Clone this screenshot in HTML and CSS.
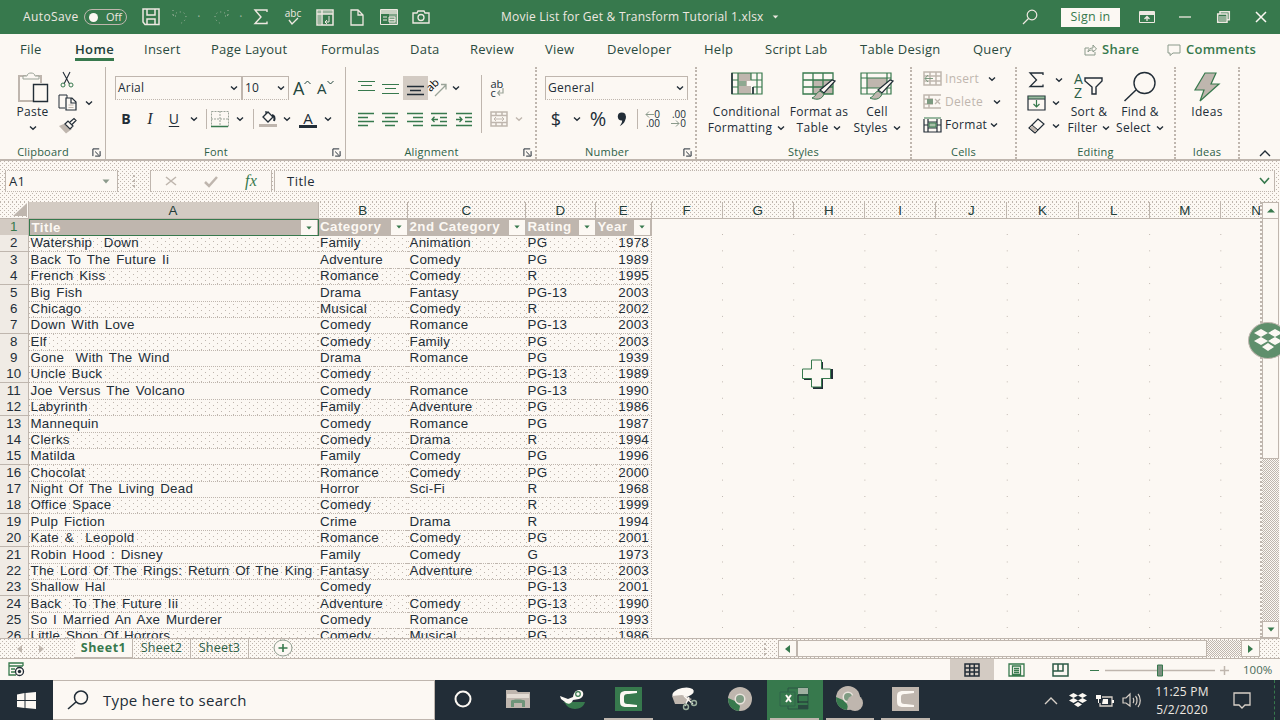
FILE: index.html
```html
<!DOCTYPE html>
<html lang="en">
<head>
<meta charset="utf-8">
<title>Movie List for Get &amp; Transform Tutorial 1.xlsx</title>
<link rel="stylesheet" href="styles.css">
</head>
<body>
<svg class="defs" width="0" height="0">
  <symbol id="chev" viewBox="0 0 8 6"><path d="M1 1.5l3 2.7 3-2.7" fill="none" stroke="currentColor" stroke-width="1.4"/></symbol>
  <symbol id="tri" viewBox="0 0 8 5"><path d="M0.5 0.5h7L4 4.5z" fill="currentColor"/></symbol>
  <symbol id="launch" viewBox="0 0 10 10"><path d="M1 9V1h7M3.5 4l4 4M9 3.5V9H3.5" fill="none" stroke="currentColor" stroke-width="1.1"/></symbol>
</svg>

<div class="app">
<header class="titlebar">
  <span class="autosave">AutoSave</span>
  <span class="toggle"><i></i><b>Off</b></span>
  <span class="tb save"><svg width="18" height="18"><path d="M1 1h16v15.500H3L1 14zM5 1v6h8V1M5 16v-5h8v5" fill="none" stroke="currentColor" stroke-width="1.500"/></svg></span>
  <span class="tb undo dim"><svg width="16" height="16"><path d="M1 1v6h6M1 7c4-6 13-5 13 1 0 3-3 5-6 7" fill="none" stroke="currentColor" stroke-dasharray="1 3"/></svg></span>
  <span class="tb dot dim">·</span>
  <span class="tb redo dim"><svg width="16" height="16"><path d="M15 1v6H9M15 7C11 1 2 2 2 8c0 3 3 5 6 7" fill="none" stroke="currentColor" stroke-dasharray="1 3"/></svg></span>
  <span class="tb dot2 dim">·</span>
  <span class="tb"><svg width="14" height="16"><path d="M13 3V1H1l6 7-6 6.500h12v-2" fill="none" stroke="currentColor" stroke-width="1.400"/></svg></span>
  <span class="tb abc"><span>abc</span><svg width="12" height="8"><path d="M2 3l3 4 6-6" fill="none" stroke="currentColor" stroke-width="1.400"/></svg></span>
  <span class="tb"><svg width="18" height="17"><path d="M1 1h16v15H1zM1 5h16M6 1v15" fill="none" stroke="currentColor" stroke-width="1.500"/><path d="M2 2h14v3H2zM2 5h3v10H2z" fill="currentColor" opacity=".55"/><path d="M13 7v6H9m2-2-2 2 2 2" fill="none" stroke="currentColor"/></svg></span>
  <span class="tb"><svg width="14" height="17"><path d="M1 1h7l5 5v10H1zM8 1v5h5" fill="none" stroke="currentColor" stroke-width="1.300"/></svg></span>
  <span class="tb"><svg width="18" height="16"><path d="M.5.5h17v15H.5z" fill="none" stroke="currentColor"/><path d="M1 1h16v4H1z" fill="currentColor" opacity=".8"/><path d="M9 5h8v10H9z" fill="currentColor" opacity=".4"/><path d="M3 8h4M3 11h4M9 8h6v5H9zM9 10.500h6" fill="none" stroke="currentColor"/></svg></span>
  <span class="tb"><svg width="18" height="14"><path d="M1 3h4l1-2h6l1 2h4v10H1z" fill="none" stroke="currentColor" stroke-width="1.400"/><circle cx="9" cy="7.500" r="3" fill="none" stroke="currentColor" stroke-width="1.300"/></svg></span>
  <span class="doc">Movie List for Get &amp; Transform Tutorial 1.xlsx</span>
  <span class="tb arrow"><svg width="7" height="4"><use href="#tri"/></svg></span>
  <span class="tb find"><svg width="16" height="16"><circle cx="10" cy="6" r="4.800" fill="none" stroke="currentColor" stroke-width="1.200"/><path d="M6.500 9.500L1 15" stroke="currentColor" stroke-width="1.300"/></svg></span>
  <span class="signin">Sign in</span>
  <span class="tb win opts"><svg width="16" height="12"><path d="M.5.5h15v11H.5z" fill="none" stroke="currentColor"/><path d="M1 1h14v3H1z" fill="currentColor"/><path d="M8 10V5.500M5.500 8L8 5.500 10.500 8" fill="none" stroke="currentColor" stroke-width="1.300"/></svg></span>
  <span class="tb win"><svg width="12" height="2"><path d="M0 1h12" stroke="currentColor" stroke-width="1.300"/></svg></span>
  <span class="tb win"><svg width="13" height="12"><path d="M3 3V.7h9.300v8H10M.7 3H10v8.300H.7z" fill="none" stroke="currentColor" stroke-width="1.500"/><path d="M2 5h7v5H2z" fill="currentColor" opacity=".5"/></svg></span>
  <span class="tb win close"><svg width="12" height="12"><path d="M1 1l10 10M11 1L1 11" stroke="currentColor" stroke-width="1.500"/></svg></span>
</header>

<nav class="tabs">
  <a>File</a><a class="on">Home</a><a>Insert</a><a>Page Layout</a><a>Formulas</a><a>Data</a><a>Review</a><a>View</a><a>Developer</a><a>Help</a><a>Script Lab</a><a>Table Design</a><a>Query</a>
  <a class="share"><svg width="13" height="12"><path d="M5 4H1v7h10V8M4 8c0-3 2-4 5-4V1l3.500 4L9 8V6C7 6 5 6 4 8z" fill="none" stroke="currentColor"/></svg>Share</a>
  <a class="comments"><svg width="14" height="12"><path d="M1 1h12v8H6l-3 2.500V9H1z" fill="none" stroke="currentColor"/></svg>Comments</a>
</nav>

<section class="ribbon">
  <div class="group clip">
    <div class="body">
      <div class="big paste"><svg width="32" height="32"><path d="M9 4H2v25h14M19 4h5v7" fill="none" stroke="#bfb6ae" stroke-width="2"/><path d="M6 7V4h4c0-4 8-4 8 0h4v3z" fill="#fcf8f3" stroke="#9aa398"/><path d="M16.500 12.500h14v17h-14z" fill="#fcf8f3" stroke="#222d37" stroke-width="1.400"/></svg><span>Paste</span><svg class="cv" width="8" height="6"><use href="#chev"/></svg></div>
      <div class="stack">
        <div class="cut"><svg width="14" height="16"><path d="M3 0l6.500 12M10 0L4 12" stroke="#222d37" fill="none" stroke-width="1.100"/><circle cx="3" cy="13" r="2" fill="none" stroke="#37794d"/><circle cx="11" cy="13" r="2" fill="none" stroke="#37794d"/></svg></div>
        <div class="copy"><svg width="19" height="17"><path d="M7 14H1V1h8v3" fill="none" stroke="#222d37"/><path d="M8 4h6l4 4v8H8zM13 4v5h5" fill="none" stroke="#222d37" stroke-width="1.200"/><path d="M10.500 11h5M10.500 13.500h5" stroke="#bfb6ae"/></svg><svg width="8" height="6"><use href="#chev"/></svg></div>
        <div><svg width="19" height="16"><path d="M1 8l7-3 6 6-6 4.500z" fill="#bfb6ae"/><path d="M7 6l3-3 5 5-3 3zM12 4l4-3.500 2 2-4 4" fill="#fcf8f3" stroke="#222d37" stroke-width="1.200"/></svg></div>
      </div>
    </div>
    <div class="cap"><span>Clipboard</span><svg width="9" height="9"><use href="#launch" /></svg></div>
  </div>

  <div class="group font">
    <div class="body col">
      <div class="r1"><span class="combo fname">Arial<svg width="8" height="6"><use href="#chev"/></svg></span><span class="combo fsize">10<svg width="8" height="6"><use href="#chev"/></svg></span><span class="b24 grow">A<svg width="7" height="5"><path d="M.5 4l3-3 3 3" fill="none" stroke="currentColor"/></svg></span><span class="b24 shrink">A<svg width="7" height="5"><path d="M.5 1l3 3 3-3" fill="none" stroke="currentColor"/></svg></span></div>
      <div class="r2"><span class="b24 bold">B</span><span class="b24 ital">I</span><span class="b24 under">U</span><span class="b16"><svg width="8" height="6"><use href="#chev"/></svg></span><i class="vs"></i><span class="b20"><svg width="18" height="17"><path d="M.5.500h17v15H.5zM9 0v16M0 8h18" fill="none" stroke="#9aa398" stroke-dasharray="2 1"/><path d="M0 15.500h17" stroke="#37794d" stroke-width="1.500"/></svg></span><span class="b20"><svg width="8" height="6"><use href="#chev"/></svg></span><i class="vs nar"></i><span class="b22"><svg width="19" height="18"><path d="M5 7l5-5 5 5-5 5zM8 4V1" fill="none" stroke="#222d37" stroke-width="1.300"/><path d="M14 5c3 1 3 3 2 6" fill="none" stroke="#222d37" stroke-width="2"/><path d="M1 14h18v3H1z" fill="#bfb6ae"/></svg></span><span class="b18"><svg width="8" height="6"><use href="#chev"/></svg></span><span class="b24 fcolor">A</span><span class="b16"><svg width="8" height="6"><use href="#chev"/></svg></span></div>
    </div>
    <div class="cap"><span>Font</span><svg width="9" height="9"><use href="#launch"/></svg></div>
  </div>

  <div class="group align">
    <div class="body">
      <div class="half">
        <div class="r1"><span class="b24h"><svg width="17" height="14"><path d="M0 .500h17M3 4.500h11M0 9.500h17" stroke="currentColor" stroke-width="1.200"/></svg></span><span class="b24h"><svg width="17" height="14"><path d="M0 3.500h17M3 7.500h11M0 12.500h17" stroke="currentColor" stroke-width="1.200"/></svg></span><span class="b24h sel"><svg width="17" height="14"><path d="M0 5.500h17M3 9.500h11M0 13.500h17" stroke="#222d37" stroke-width="1.300"/></svg></span><span class="b20 orient"><svg width="20" height="18"><path d="M7 17L18 6M13 5.500h5v5" fill="none" stroke="#9aa398" stroke-width="1.300"/><text x="0" y="11" transform="rotate(-45 4 9)" font-size="11">ab</text></svg></span><span class="b16"><svg width="8" height="6"><use href="#chev"/></svg></span></div>
        <div class="r2"><span class="b24h"><svg width="17" height="15"><path d="M0 1.500h16M0 5.500h10M0 9.500h16M0 13.500h10" stroke="currentColor" stroke-width="1.300"/></svg></span><span class="b24h"><svg width="17" height="15"><path d="M0 1.500h16M3 5.500h10M0 9.500h16M3 13.500h10" stroke="currentColor" stroke-width="1.300"/></svg></span><span class="b24h"><svg width="17" height="15"><path d="M0 1.500h16M6 5.500h10M0 9.500h16M6 13.500h10" stroke="currentColor" stroke-width="1.300"/></svg></span><span class="b24h"><svg width="17" height="15"><path d="M0 1.500h16M9 5.500h7M9 9.500h7M0 13.500h16M7 7.500H1M3.500 4.700L1 7.500 3.500 10" fill="none" stroke="currentColor" stroke-width="1.300"/></svg></span><span class="b24h"><svg width="17" height="15"><path d="M0 1.500h16M9 5.500h7M9 9.500h7M0 13.500h16M0 7.500h6M3.500 4.700L6 7.500 3.500 10" fill="none" stroke="currentColor" stroke-width="1.300"/></svg></span></div>
      </div>
      <i class="vs tall"></i>
      <div class="half">
        <div class="r1"><span class="b24 wrap"><span>ab</span><span class="ce">c<svg width="8" height="8"><path d="M6 0v5H1M3 2.500L.7 5 3 7.500" fill="none" stroke="#9aa398" stroke-width="1.200"/></svg></span></span></div>
        <div class="r2"><span class="b24"><svg width="18" height="16"><path d="M1 1h16v14H1zM1 4.500h16M1 11.500h16M6 1v3M12 1v3M6 12v3M12 12v3" fill="none" stroke="#bfb6ae" stroke-width="1.500"/><path d="M4 8h10M6 6L4 8l2 2M12 6l2 2-2 2" fill="none" stroke="#bfb6ae"/></svg></span><span class="b16 faint"><svg width="8" height="6"><use href="#chev"/></svg></span></div>
      </div>
    </div>
    <div class="cap"><span>Alignment</span><svg width="9" height="9"><use href="#launch"/></svg></div>
  </div>

  <div class="group number">
    <div class="body col">
      <div class="r1"><span class="combo fmt">General<svg width="8" height="6"><use href="#chev"/></svg></span></div>
      <div class="r2"><span class="b22 cur">$</span><span class="b20"><svg width="8" height="6"><use href="#chev"/></svg></span><span class="b22 pct">%</span><span class="b26"><svg width="10" height="15"><circle cx="4.800" cy="4.500" r="4" fill="#222d37"/><path d="M8.800 4c0 5-2 8-6 10 2-3 3-5 2-7z" fill="#222d37"/></svg></span><i class="vs four"></i><span class="b24 dec"><b><svg width="9" height="7"><path d="M9 3.500H1M4 .5L1 3.500l3 3" fill="none" stroke="#8b9a8b"/></svg>0</b><b>.00</b></span><span class="b26 dec"><b>.00</b><b><svg width="9" height="7"><path d="M0 3.500h8M5 .5l3 3-3 3" fill="none" stroke="#8b9a8b"/></svg>0</b></span></div>
    </div>
    <div class="cap"><span>Number</span><svg width="9" height="9"><use href="#launch"/></svg></div>
  </div>

  <div class="group styles">
    <div class="body">
      <div class="big w81"><svg width="32" height="28"><path d="M7 1h13v21H7z" fill="#bfb6ae"/><path d="M16 9h7v5h-7z" fill="#fcf8f3"/><path d="M1 1h30v21H1zM1 8h6M1 15h6M20 8h11M22 15h9M7 1v21M20 1v7M22 15v7M26 1v21" fill="none" stroke="#37794d" stroke-width="1.200"/><path d="M1 1v21M22 15v7" stroke="#222d37" stroke-width="1.500"/><path d="M8 9h7v5H8z" fill="#8fa991"/></svg><span>Conditional</span><span>Formatting <svg width="8" height="6"><use href="#chev"/></svg></span></div>
      <div class="big w64"><svg width="34" height="28"><path d="M11 8h20v14H11z" fill="#bfb6ae"/><path d="M1 1h30v21H1zM1 8h30M1 15h30M11 1v21M21 1v21" fill="none" stroke="#37794d" stroke-width="1.300"/><path d="M33 9L22 21l-4-3 12-10z" fill="#fcf8f3" stroke="#222d37" stroke-width="1.200"/><path d="M18 19l4 3c-2 6-8 6-12 4 4-1 4-6 8-7z" fill="#bfb6ae" stroke="#37794d"/></svg><span>Format as</span><span>Table <svg width="8" height="6"><use href="#chev"/></svg></span></div>
      <div class="big w52"><svg width="34" height="28"><path d="M7 6h20v10H7z" fill="#bfb6ae"/><path d="M1 1h30v21H1zM1 6h30M1 16h30M7 1v21M27 1v21" fill="none" stroke="#37794d" stroke-width="1.200"/><path d="M33 9L22 21l-4-3 12-10z" fill="#fcf8f3" stroke="#222d37" stroke-width="1.200"/><path d="M18 19l4 3c-2 6-8 6-12 4 4-1 4-6 8-7z" fill="#bfb6ae" stroke="#37794d"/></svg><span>Cell</span><span>Styles <svg width="8" height="6"><use href="#chev"/></svg></span></div>
    </div>
    <div class="cap"><span>Styles</span></div>
  </div>

  <div class="group cells">
    <div class="body col">
      <div class="line faint"><svg width="19" height="15"><path d="M1 1h17v13H1zM1 5h17M1 10h17M7 1v13M13 1v13" fill="none" stroke="currentColor" stroke-width="1.500"/><path d="M2 7.500h8M5 4L2 7.500 5 11" fill="none" stroke="#7c9a80"/></svg><span class="t1">Insert</span><svg class="cv" width="8" height="6"><use href="#chev"/></svg></div>
      <div class="line faint"><svg width="19" height="15"><path d="M10 1H1v13h17M1 5h9M1 10h9M6 1v13M10 1h8" fill="none" stroke="currentColor" stroke-width="1.500"/><path d="M4 5h6v5H4z" fill="#7c9a80"/><path d="M12 5l5 5M17 5l-5 5" stroke="currentColor" stroke-width="1.300"/></svg><span class="t2">Delete</span><svg class="cv" width="8" height="6"><use href="#chev"/></svg></div>
      <div class="line"><svg width="19" height="16"><path d="M1 2v13h17V2M5 5h9v6H5zM1 8h4M14 8h4M5 2v13M14 2v13" fill="none" stroke="#222d37" stroke-width="1.200"/><path d="M1 1h17M6 6h7v4H6z" stroke="#37794d" fill="#a9c0a8"/></svg><span class="t3">Format</span><svg class="cv" width="8" height="6"><use href="#chev"/></svg></div>
    </div>
    <div class="cap"><span>Cells</span></div>
  </div>

  <div class="group editing">
    <div class="body">
      <div class="stack">
        <div><svg width="20" height="16"><path d="M16 3V1H3l6.500 7L3 14.500h13v-2" fill="none" stroke="currentColor" stroke-width="1.300"/></svg><svg width="8" height="6"><use href="#chev"/></svg></div>
        <div class="pull"><svg width="20" height="16"><path d="M1 1h17v14H1zM1 4h17" fill="none" stroke="#222d37" stroke-width="1.200"/><path d="M1 1h17v3H1z" fill="#37794d" opacity=".5"/><path d="M9.500 5v7M6.500 9l3 3 3-3" fill="none" stroke="#37794d" stroke-width="1.200"/></svg><svg width="8" height="6"><use href="#chev"/></svg></div>
        <div class="pull"><svg width="20" height="16"><path d="M2 10l9-9 6 5-9 9z" fill="none" stroke="#222d37" stroke-width="1.200"/><path d="M2 10l3-3 6 5-3 3z" fill="#bfb6ae" stroke="#222d37"/></svg><svg width="8" height="6"><use href="#chev"/></svg></div>
      </div>
      <div class="big w50"><span class="sort"><span class="az"><b>A</b><b>Z</b></span><svg width="20" height="20"><path d="M1 2h17v3l-6 6v7H8v-7L1 5z" fill="none" stroke="#222d37" stroke-width="1.400"/></svg></span><span>Sort &amp;</span><span>Filter <svg width="8" height="6"><use href="#chev"/></svg></span></div>
      <div class="big w52"><svg width="34" height="30"><circle cx="21.500" cy="11" r="10.500" fill="none" stroke="#222d37" stroke-width="1.400"/><path d="M13 18L1.500 29" stroke="#222d37" stroke-width="1.500"/></svg><span>Find &amp;</span><span>Select <svg width="8" height="6"><use href="#chev"/></svg></span></div>
    </div>
    <div class="cap"><span>Editing</span></div>
  </div>

  <div class="group ideas">
    <div class="body"><div class="big w62"><svg width="26" height="30"><path d="M11 1h11l-5 11h8L6 29l4-11H1z" fill="#bfb6ae" stroke="#37794d" stroke-width="1.200"/></svg><span>Ideas</span></div></div>
    <div class="cap"><span>Ideas</span></div>
  </div>
  <div class="collapse"><svg width="12" height="8"><path d="M1 7l5-5 5 5" fill="none" stroke="#222d37" stroke-width="1.400"/></svg></div>
</section>

<section class="formula dither">
  <div class="name">A1<svg width="8" height="5"><use href="#tri"/></svg></div>
  <div class="grip"></div>
  <div class="fx"><svg width="12" height="10"><path d="M1 1l10 8M11 1L1 9" stroke="#bfb6ae" stroke-width="1.600"/></svg><svg width="14" height="11"><path d="M1 6l4 4 8-9" fill="none" stroke="#bfb6ae" stroke-width="2.500"/></svg><i>fx</i></div>
  <div class="value"><span>Title</span><svg width="11" height="8"><path d="M1 1l4.500 5L10 1" fill="none" stroke="#37794d" stroke-width="1.600"/></svg></div>
</section>

<main class="sheet">
  <div class="cellsarea">
    <div class="cols dither">
      <span class="corner"><svg width="14" height="13"><path d="M14 0v13H0z" fill="#bfb6ae"/></svg></span><span class="cur">A</span><span>B</span><span>C</span><span>D</span><span>E</span><span>F</span><span>G</span><span>H</span><span>I</span><span>J</span><span>K</span><span>L</span><span>M</span><span class="last">N</span>
    </div>
    <div class="gridwrap">
      <div class="rows">
        <div class="row head"><b>1</b><span class="selcell">Title<i><svg width="6" height="4"><use href="#tri"/></svg></i></span><span>Category<i><svg width="6" height="4"><use href="#tri"/></svg></i></span><span>2nd Category<i><svg width="6" height="4"><use href="#tri"/></svg></i></span><span>Rating<i><svg width="6" height="4"><use href="#tri"/></svg></i></span><span>Year<i><svg width="6" height="4"><use href="#tri"/></svg></i></span></div>
        <div class="row"><b>2</b><span>Watership&nbsp; Down</span><span>Family</span><span>Animation</span><span>PG</span><span>1978</span></div>
        <div class="row"><b>3</b><span>Back To The Future Ii</span><span>Adventure</span><span>Comedy</span><span>PG</span><span>1989</span></div>
        <div class="row"><b>4</b><span>French Kiss</span><span>Romance</span><span>Comedy</span><span>R</span><span>1995</span></div>
        <div class="row"><b>5</b><span>Big Fish</span><span>Drama</span><span>Fantasy</span><span>PG-13</span><span>2003</span></div>
        <div class="row"><b>6</b><span>Chicago</span><span>Musical</span><span>Comedy</span><span>R</span><span>2002</span></div>
        <div class="row"><b>7</b><span>Down With Love</span><span>Comedy</span><span>Romance</span><span>PG-13</span><span>2003</span></div>
        <div class="row"><b>8</b><span>Elf</span><span>Comedy</span><span>Family</span><span>PG</span><span>2003</span></div>
        <div class="row"><b>9</b><span>Gone&nbsp; With The Wind</span><span>Drama</span><span>Romance</span><span>PG</span><span>1939</span></div>
        <div class="row"><b>10</b><span>Uncle Buck</span><span>Comedy</span><span></span><span>PG-13</span><span>1989</span></div>
        <div class="row"><b>11</b><span>Joe Versus The Volcano</span><span>Comedy</span><span>Romance</span><span>PG-13</span><span>1990</span></div>
        <div class="row"><b>12</b><span>Labyrinth</span><span>Family</span><span>Adventure</span><span>PG</span><span>1986</span></div>
        <div class="row"><b>13</b><span>Mannequin</span><span>Comedy</span><span>Romance</span><span>PG</span><span>1987</span></div>
        <div class="row"><b>14</b><span>Clerks</span><span>Comedy</span><span>Drama</span><span>R</span><span>1994</span></div>
        <div class="row"><b>15</b><span>Matilda</span><span>Family</span><span>Comedy</span><span>PG</span><span>1996</span></div>
        <div class="row"><b>16</b><span>Chocolat</span><span>Romance</span><span>Comedy</span><span>PG</span><span>2000</span></div>
        <div class="row"><b>17</b><span>Night Of The Living Dead</span><span>Horror</span><span>Sci-Fi</span><span>R</span><span>1968</span></div>
        <div class="row"><b>18</b><span>Office Space</span><span>Comedy</span><span></span><span>R</span><span>1999</span></div>
        <div class="row"><b>19</b><span>Pulp Fiction</span><span>Crime</span><span>Drama</span><span>R</span><span>1994</span></div>
        <div class="row"><b>20</b><span>Kate &amp;&nbsp; Leopold</span><span>Romance</span><span>Comedy</span><span>PG</span><span>2001</span></div>
        <div class="row"><b>21</b><span>Robin Hood : Disney</span><span>Family</span><span>Comedy</span><span>G</span><span>1973</span></div>
        <div class="row"><b>22</b><span>The Lord Of The Rings: Return Of The King</span><span>Fantasy</span><span>Adventure</span><span>PG-13</span><span>2003</span></div>
        <div class="row"><b>23</b><span>Shallow Hal</span><span>Comedy</span><span></span><span>PG-13</span><span>2001</span></div>
        <div class="row"><b>24</b><span>Back&nbsp; To The Future Iii</span><span>Adventure</span><span>Comedy</span><span>PG-13</span><span>1990</span></div>
        <div class="row"><b>25</b><span>So I Married An Axe Murderer</span><span>Comedy</span><span>Romance</span><span>PG-13</span><span>1993</span></div>
        <div class="row"><b>26</b><span>Little Shop Of Horrors</span><span>Comedy</span><span>Musical</span><span>PG</span><span>1986</span></div>
      </div>
      <div class="blank"></div>
    </div>
  </div>
  <div class="vscroll">
    <span class="btn"><svg width="8" height="5"><path d="M0 4.500h8L4 .5z" fill="#37794d"/></svg></span>
    <span class="thumb"></span><span class="track"></span>
    <span class="btn"><svg width="8" height="5"><use href="#tri"/></svg></span>
  </div>
</main>

<section class="sheetbar dither">
  <span class="nav n1"><svg width="5" height="8"><path d="M5 0v8L0 4z" fill="#bfb6ae"/></svg></span><span class="nav n2"><svg width="5" height="8"><path d="M0 0v8l5-4z" fill="#bfb6ae"/></svg></span>
  <span class="stab on">Sheet1</span><span class="stab">Sheet2</span><span class="stab">Sheet3</span>
  <span class="add"><svg width="20" height="18"><ellipse cx="10" cy="9" rx="9" ry="8" fill="#fcf8f3" stroke="#8f9c8f"/><path d="M10 5v8M5.500 9h9" stroke="#37794d" stroke-width="1.600"/></svg></span>
  <span class="grip"></span>
  <span class="hbtn"><svg width="5" height="8"><path d="M5 0v8L0 4z" fill="#37794d"/></svg></span><span class="hthumb"></span><span class="htrack"></span><span class="hbtn"><svg width="5" height="8"><path d="M0 0v8l5-4z" fill="#37794d"/></svg></span>
</section>

<section class="status">
  <span class="macro"><svg width="17" height="15"><path d="M8 13H1V1h14v3M1 4h14M3 7h4M3 10h4" fill="none" stroke="#37794d" stroke-width="1.300"/><circle cx="11.500" cy="9.500" r="4" fill="#fcf8f3" stroke="#222d37" stroke-width="1.300"/><circle cx="11.500" cy="9.500" r="1.700" fill="#222d37"/></svg></span>
  <span class="view on"><svg width="16" height="14"><path d="M1 1h14v12H1zM1 5h14M1 9h14M5.700 1v12M10.300 1v12" fill="none" stroke="#222d37" stroke-width="1.500"/></svg></span>
  <span class="view"><svg width="17" height="14"><path d="M1 1h15v12H1zM4.500 3h8v8.500h-8zM6 5.500h5M6 7.500h5M6 9.500h5" fill="none" stroke="#37794d" stroke-width="1.300"/></svg></span>
  <span class="view"><svg width="17" height="14"><path d="M1 1h15v12H1zM1 8h10V1M6 1v7" fill="none" stroke="#2c5a45" stroke-width="1.500"/></svg></span>
  <span class="zoombar"><svg width="140" height="14"><path d="M2 7.500h9" stroke="#37794d"/><path d="M17 7.500h110M132 7.500h9M136.500 3v9" stroke="#bfb6ae" stroke-width="1.500"/><path d="M69.500 2h5v11h-5z" fill="#7c8f80" stroke="#37794d"/></svg></span>
  <span class="pctv">100%</span>
</section>

<footer class="taskbar">
  <span class="start"><svg width="19" height="17"><path d="M0 2.500L7.500 1v7H0zM8.500 1L19 0v8H8.500zM0 9h7.500v7L0 15zM8.500 9H19v8l-10.500-1z" fill="#fcf8f3"/></svg></span>
  <span class="search"><svg width="22" height="20"><circle cx="14" cy="7.500" r="6.500" fill="none" stroke="#222d37" stroke-width="1.500"/><path d="M9 12L1 19" stroke="#222d37" stroke-width="1.600"/></svg>Type here to search</span>
  <span class="app-i"><svg width="18" height="18"><circle cx="9" cy="9" r="7.500" fill="none" stroke="#fcf8f3" stroke-width="2"/></svg></span>
  <span class="app-i"><svg width="24" height="20"><path d="M0 1h10l2 2h12v16H0z" fill="#bfb6ae"/><path d="M1 5h22v4H1z" fill="#e4ddd5"/><path d="M5 18v-6c0-2 14-2 14 0v6h-3v-4H8v4z" fill="#6f957a"/></svg></span>
  <span class="app-i"><svg width="26" height="20"><path d="M3 13h22c-2 9-17 9-20 1z" fill="#37794d"/><path d="M0 7l8 3 5-2c1-6 4-7 7-7 5 1 4 8-1 9l-6 1c-2 5-6 4-8 2L1 10z" fill="#fcf8f3"/><circle cx="18" cy="5" r="2.300" fill="none" stroke="#37794d" stroke-width="1.200"/></svg></span>
  <span class="app-i run"><svg width="27" height="24"><path d="M0 0h27v24H0z" fill="#37794d"/><path d="M22 4H12c-7 0-7 2-7 8s0 8 7 8h10v-2l-8-1c-5 0-5-1-5-5s0-5 5-5l8-1z" fill="#fcf8f3"/></svg></span>
  <span class="app-i"><svg width="26" height="24"><ellipse cx="12" cy="6" rx="11" ry="5" fill="#fcf8f3" transform="rotate(-12 12 6)"/><path d="M1 9l10-1 10 4-8 5H4z" fill="#bfb6ae"/><path d="M13 9l9 8M18 10l-4 9" stroke="#fcf8f3" stroke-width="1.300"/><circle cx="23" cy="16" r="2.500" fill="none" stroke="#9db19f" stroke-width="1.400"/><circle cx="15" cy="20" r="2.500" fill="none" stroke="#9db19f" stroke-width="1.400"/></svg></span>
  <span class="app-i"><svg width="26" height="24"><circle cx="13" cy="12" r="12" fill="#bfb6ae"/><path d="M1 11l7 3 5 5-1 5C4 23 1 18 1 11z" fill="#37794d"/><circle cx="13" cy="12" r="5.500" fill="#e9e3dc"/><circle cx="13" cy="12" r="4" fill="#7d9b82"/></svg></span>
  <span class="app-i excel run"><svg width="30" height="24"><path d="M8 1h20v21H8z" fill="#37794d" stroke="#2c5745"/><path d="M18 1h10v6H18z" fill="#9fb0a0"/><path d="M18 8h10M18 15h10M18 8v8" stroke="#222d37"/><path d="M18 18h10v4H18z" fill="#2a4a40"/><path d="M0 5h15v14H0z" fill="#37794d" stroke="#30654a"/><path d="M6 8l5 7M11 8l-5 7" stroke="#fcf8f3" stroke-width="2"/></svg></span>
  <span class="app-i run"><svg width="30" height="26"><circle cx="13" cy="12" r="12" fill="#bfb6ae"/><path d="M1 11l7 3 5 5-1 5C4 23 1 18 1 11z" fill="#37794d"/><circle cx="13" cy="11" r="5.500" fill="#e9e3dc"/><circle cx="13" cy="11" r="4" fill="#7d9b82"/><circle cx="20" cy="17" r="8" fill="#bfb6ae"/></svg></span>
  <span class="app-i run"><svg width="27" height="24"><path d="M0 0h27v24H0z" fill="#bfb6ae"/><path d="M22 4H12c-7 0-7 2-7 8s0 8 7 8h10v-2l-8-1c-5 0-5-1-5-5s0-5 5-5l8-1z" fill="#fcf8f3"/></svg></span>
  <span class="tray first"><svg width="14" height="9"><path d="M1 8l6-6 6 6" fill="none" stroke="#d8d0c8" stroke-width="1.400"/></svg></span>
  <span class="tray"><svg width="18" height="15"><path d="M4.500 0L9 2.500 4.500 5 0 2.500zM13.500 0L18 2.500 13.500 5 9 2.500zM4.500 5L9 7.500 4.500 10 0 7.500zM13.500 5L18 7.500 13.500 10 9 7.500zM9 9l4 2.500L9 14l-4-2.500z" fill="#fcf8f3"/></svg></span>
  <span class="tray"><svg width="18" height="13"><path d="M6 3h10v9H4V9" fill="none" stroke="#d8d0c8" stroke-width="1.300"/><path d="M7 5h5v5H6zM16 6h2v3h-2zM0 1h5v4H3v4H2V5H0z" fill="#fcf8f3"/></svg></span>
  <span class="tray"><svg width="19" height="15"><path d="M1 5h3l4-4v12L4 10H1zM11 5c1 1 1 4 0 5M13.500 3c2 2 2 7 0 9M16 1c3 3 3 10 0 13" fill="none" stroke="#d8d0c8" stroke-width="1.200"/></svg></span>
  <span class="clock"><span>11:25 PM</span><span>5/2/2020</span></span>
  <span class="note"><svg width="18" height="17"><path d="M1 1h16v12h-5l-3 3-3-3H1z" fill="none" stroke="#d8d0c8" stroke-width="1.300"/></svg></span>
</footer>

<svg class="cursor" width="34" height="32"><path d="M12 3h10v7h10v10H22v10H12v-9H3v-7h9z" fill="#222d37"/><path d="M10.500 1h10v9h9v9.500h-9V28h-10v-8.500h-9V10h9z" fill="#fcf8f3" stroke="#37794d"/></svg>
<div class="bubble"><svg width="28" height="24"><path d="M7 0l7 4-7 4-7-4zM21 0l7 4-7 4-7-4zM7 8l7 4-7 4-7-4zM21 8l7 4-7 4-7-4zM14 14l6 4-6 4-6-4z" fill="#fcf8f3"/></svg></div>
</div>
</body>
</html>
```
FILE: styles.css
```css
:root{--cream:#fcf8f3;--tan:#bfb6ae;--green:#37794d;--dark:#222d37;--ui:"Open Sans","Noto Sans",sans-serif}
*{box-sizing:border-box}
body{margin:0;background:var(--cream);color:var(--dark);font:12px/16px var(--ui);letter-spacing:.2px}
svg{display:block;flex:none;overflow:visible}
.defs{position:absolute}
.app{width:1280px;height:720px;overflow:hidden;position:relative;display:flex;flex-direction:column;white-space:nowrap}
.dither{background-color:var(--cream);background-image:conic-gradient(from 270deg at 1px 1px,var(--tan) 90deg,transparent 0),conic-gradient(from 270deg at 1px 1px,var(--tan) 90deg,transparent 0);background-size:4px 4px;background-position:0 0,2px 2px}

.titlebar{height:34px;background:var(--green);color:#eee8e1;display:flex;align-items:center;padding-left:23px;flex:none}
.autosave{width:61px;font-size:12px;letter-spacing:.4px}
.toggle{width:43px;height:16px;border:1px solid var(--tan);border-radius:8px;display:flex;align-items:center;padding-left:4px;margin-right:8px}
.toggle i{width:9px;height:9px;border-radius:50%;background:var(--cream);margin-right:8px}
.toggle b{font-weight:400;font-size:11px;letter-spacing:0}
.tb{width:32px;display:grid;place-items:center}
.tb.undo{width:26px}.tb.dot{width:12px}.tb.dot2{width:8px}
.dim{color:#9fb39e}
.abc{line-height:8px;font-size:10px;letter-spacing:0}
.doc{margin-left:64px;width:262px;font-size:12px;letter-spacing:.22px}
.tb.arrow{width:24px}
.tb.find{margin-left:auto}
.signin{margin-left:15px;width:59px;height:19px;background:var(--cream);color:var(--green);display:grid;place-items:center;font-size:12.5px}
.tb.win{width:38px}.tb.opts{margin-left:8px}
.close{color:var(--cream)}

.tabs{height:30px;flex:none;display:grid;grid-template-columns:55px 69px 67px 110px 89px 60px 75px 62px 97px 61px 95px 113px 111px 83px auto;padding-left:20px;font-size:13px;letter-spacing:.25px;color:#2a4a40}
.tabs a{height:27px;line-height:31px;justify-self:start}
.tabs .on{font-weight:600;letter-spacing:.35px;color:#22403a;border-bottom:3px solid var(--green)}
.tabs .share,.tabs .comments{display:flex;align-items:center;gap:5px;font-weight:600;color:var(--green);height:31px}
.tabs .share svg,.tabs .comments svg{color:#8b9a8b}

.ribbon{height:97px;flex:none;display:flex;border-bottom:2px solid var(--tan)}
.group{display:flex;flex-direction:column;position:relative;height:92px;margin-top:3px;border-right:1px solid var(--tan)}
.body{height:77px;display:flex;color:var(--dark)}
.body.col{flex-direction:column}
.cap{height:15px;display:grid;align-items:center;justify-items:center;font-size:11px;color:#2d6047}
.cap svg{color:var(--dark)}
.clip{width:106px}.clip .cap{grid-template-columns:86px 20px}
.font{width:240px}.font .cap{grid-template-columns:220px 20px}
.align{width:191px}.align .cap{grid-template-columns:171px 20px}
.number{width:160px}.number .cap{grid-template-columns:140px 20px}
.align,.number,.styles,.cells,.editing,.ideas{border-right:2px dotted var(--tan)}
.styles{width:215px}.cells{width:105px}.editing{width:159px}.ideas{width:64px}
.big{display:flex;flex-direction:column;align-items:center;padding-top:5px}
.big>svg:first-child,.sort{height:32px}
.big>span:not(.sort){height:16px;display:flex;align-items:center;gap:5px;font-size:12px;letter-spacing:.3px}
.paste{width:58px;padding-left:7px;padding-top:5px}
.big .cv{margin-top:5px}
.stack{display:flex;flex-direction:column;padding-top:1px;width:40px}
.stack>div{height:23px;display:flex;align-items:center;gap:8px}
.cut{padding-left:2px}
.r1{height:24px;margin-top:9px;display:flex;align-items:center}
.r2{height:38px;display:flex;align-items:center}
.font .r1,.font .r2,.align .half:first-child,.number .r1,.number .r2{margin-left:8px}
.combo{height:24px;border:1px solid var(--tan);border-bottom-style:dotted;display:flex;align-items:center;justify-content:space-between;padding:0 3px 0 2px;font-size:12px}
.fname{width:127px}.fsize{width:47px}.fmt{width:143px;letter-spacing:.3px}
.font .r1{margin-left:9px}
.b16,.b18,.b20,.b22,.b24,.b24h,.b26{display:grid;place-items:center;height:24px}
.b16{width:16px}.b18{width:18px}.b20{width:20px}.b22{width:22px}.b24{width:24px}.b24h{width:24.5px}.b26{width:26px}
.b24h{color:var(--green)}
.sel{background:#d3cbc3}
.grow,.shrink{display:flex;align-items:center;font-size:18px;letter-spacing:0;padding-left:4px;color:#23463d}
.shrink{font-size:15px}
.grow svg,.shrink svg{margin-bottom:12px}
.bold{font-weight:700;font-size:14px}
.ital{font:italic 16px "Liberation Serif",serif}
.under{font-size:14px;text-decoration:underline;text-underline-offset:2px}
.fcolor{font-size:15px;height:18px;line-height:14px;border-bottom:3px solid var(--dark);width:18px;margin:0 3px}
.vs{width:8px;height:20px;background:linear-gradient(var(--tan),var(--tan)) center/1px 100% no-repeat}
.vs.nar{width:6px}.vs.four{width:4px}
.vs.tall{width:10px;height:58px;margin-top:8px}
.r2 .cur{font-size:18px}
.pct{font-size:20px}
.orient{letter-spacing:0}
.wrap{display:flex;flex-direction:column;align-items:flex-start;justify-content:center;font-size:11px;line-height:9px;letter-spacing:0;padding-left:4px}
.ce{display:flex;gap:1px}
.dec{display:flex;flex-direction:column;align-items:flex-end;justify-content:center;font-size:10px;line-height:9px;letter-spacing:0;padding-right:3px}
.dec b{font-weight:400;display:flex;align-items:center;height:9px}
.faint{color:var(--tan)}
.styles .body{padding-left:9px}
.w81{width:81px}.w64{width:64px}.w52{width:52px}.w50{width:50px}.w62{width:62px}
.line{display:flex;align-items:center;height:23px;padding-left:11px;font-size:12px;letter-spacing:.3px}
.line span{margin-left:3px}
.line .cv{color:var(--dark)}
.t1{width:43px}.t2{width:48px}.t3{width:45px}
.editing .stack{width:47px;padding-left:10px}
.pull{gap:5px!important}
.sort{display:flex;align-items:center;gap:1px;padding-bottom:4px}
.az{display:flex;flex-direction:column;line-height:14px;font-size:14px;color:#2d6047}
.az b{font-weight:400}
.collapse{margin:85px 0 0 19px}

.formula{height:41px;flex:none;display:flex;padding:9px 5px 0}
.name,.fx,.value{height:22px;background:var(--cream);border:1px solid var(--tan);display:flex;align-items:center}
.formula>div{border-top-style:dotted;border-bottom-style:dotted}
.name{width:113px;justify-content:space-between;padding:0 7px 0 3px;font-size:13px}
.name svg{color:#8b9a8b}
.formula>.grip{width:2px;height:12px;margin:5px 15px 0 15px;border:0 dotted;background:repeating-linear-gradient(var(--tan) 0 2px,transparent 2px 5px)}
.fx{width:122px;justify-content:space-between;padding:0 14px;font:16px "Liberation Serif",serif;color:var(--green)}
.value{margin-left:2px;flex:1;padding:0 4px 0 12px;justify-content:space-between;font-size:13px;letter-spacing:.5px}

.sheet{height:436px;flex:none;display:flex;font:13.33px/16px "Liberation Sans",Arial,sans-serif}
.cellsarea{width:1260px;overflow:hidden}
.cols{height:17px;display:grid;grid-template-columns:28.5px 290px 89.5px 118px 70px 55.5px repeat(9,71.2px);border-bottom:1px solid var(--tan)}
.cols span{border-right:1px solid var(--tan);text-align:center;line-height:18px;color:#223c38;height:16px}
.cols .corner{display:flex;justify-content:flex-end;align-items:flex-end;padding:0 1px 2px 0}
.cols .cur{background:#d3cbc3}
.gridwrap{display:flex;height:419px;overflow:hidden}
.rows{width:652px;flex:none}
.row{height:16.39px;display:grid;grid-template-columns:28.5px 289.5px 89.5px 118px 70px 56.5px;letter-spacing:.25px;word-spacing:1.8px}
.row b{font-weight:400;text-align:center;background:#f0ebe5;border-right:1px solid var(--tan);border-bottom:1px solid var(--tan);letter-spacing:0}
.row span{padding-left:2px;border-bottom:1px dotted var(--tan);line-height:16px;overflow:hidden}
.row span:last-child{text-align:right;padding-right:2px;border-right:1px dotted var(--tan)}
.row:nth-child(even) span{background-image:conic-gradient(from 270deg at 1px 1px,var(--tan) 90deg,transparent 0),conic-gradient(from 270deg at 1px 1px,var(--tan) 90deg,transparent 0);background-size:8px 6px;background-position:0 0,4px 3px}
.row.head span{background:var(--tan);color:var(--cream);font-weight:700;display:flex;justify-content:space-between;align-items:center;padding-right:1px;letter-spacing:.45px;word-spacing:0}
.row.head b{background:#d3cbc3;color:var(--green)}
.row.head i{width:16px;height:15px;background:var(--cream);display:grid;place-items:center;color:var(--green)}
.row.head .selcell{border:1px solid var(--green);margin-right:-1px;z-index:1}
.blank{flex:1;background:conic-gradient(from 270deg at 1px 1px,var(--tan) 90deg,transparent 0) 70px 15px/71.2px 16.39px}
.vscroll{width:20px;display:flex;flex-direction:column;border-left:2px dotted var(--tan);padding-right:1px;color:var(--green)}
.vscroll .btn{height:17px;border:1px solid var(--tan);display:grid;place-items:center;background:var(--cream)}
.thumb{height:240px;border:1px solid var(--tan);border-top:0}
.track{flex:1;background:conic-gradient(var(--tan) 25%,var(--cream) 0 50%,var(--tan) 0 75%,var(--cream) 0) 0 0/2px 2px}

.sheetbar{height:21px;flex:none;display:flex;border-top:1px solid var(--tan);border-bottom:1px solid var(--tan)}
.nav{display:grid;place-items:center}
.n1{width:22px;margin-left:8px}.n2{width:22px;margin-right:23px}
.stab{width:58px;text-align:center;line-height:17px;font-size:12.5px;border-right:1px solid var(--tan);color:#2d6047;height:19px}
.stab.on{background:var(--cream);font-weight:700;letter-spacing:.5px;color:var(--green);border-bottom:1px solid var(--tan)}
.add{margin:0 0 0 24px}
.sheetbar .grip{width:2px;height:12px;margin:4px 12px 0 auto;background:repeating-linear-gradient(var(--tan) 0 2px,transparent 2px 5px)}
.hbtn{width:19px;height:17px;margin-top:1px;border:1px solid var(--tan);background:var(--cream);display:grid;place-items:center}
.hthumb{width:410px;height:17px;margin-top:1px;background:var(--cream);border:1px solid var(--tan)}
.htrack{width:34px;height:17px;margin-top:1px;background:conic-gradient(var(--tan) 25%,var(--cream) 0 50%,var(--tan) 0 75%,var(--cream) 0) 0 0/2px 2px}
.hbtn:last-child{margin-right:20px}

.status{height:21px;flex:none;display:flex;align-items:center}
.macro{margin-left:8px;margin-right:auto}
.view{width:44.5px;height:21px;display:grid;place-items:center}
.view.on{background:#d3cbc3}
.zoombar{margin-left:5px}
.pctv{width:52px;padding-left:15px;font-size:11.5px;letter-spacing:0;color:#4a6b58}

.taskbar{height:40px;flex:none;background:var(--dark);display:flex;color:#eee8e1}
.start{width:53px;display:grid;place-items:center}
.search{width:382px;background:var(--cream);color:var(--dark);border-top:1px solid var(--tan);border-bottom:1px solid var(--tan);border-right:1px solid var(--tan);display:flex;align-items:center;gap:14px;padding-left:14px;font-size:15px;letter-spacing:.3px}
.app-i{width:55.4px;display:grid;place-items:center;border-bottom:2px solid transparent}
.app-i.run{border-image:linear-gradient(90deg,transparent 5px,var(--tan) 5px 50px,transparent 50px) 2}
.excel{background:var(--green)}
.tray{width:27px;display:grid;place-items:center}
.tray.first{margin-left:auto}
.clock{width:74px;display:flex;flex-direction:column;align-items:center;line-height:18px;font-size:12px;padding-top:3px}
.note{display:grid;place-items:center;margin-right:5px;border-right:1px dashed var(--green);width:56px;padding-right:12px;padding-left:3px}

.cursor{position:absolute;left:801px;top:359px}
.bubble{position:absolute;left:1248px;top:322px;width:40px;height:37px;border-radius:50%;background:#5f8f6c;border:1px solid var(--tan);display:grid;place-items:center;overflow:hidden}
```
